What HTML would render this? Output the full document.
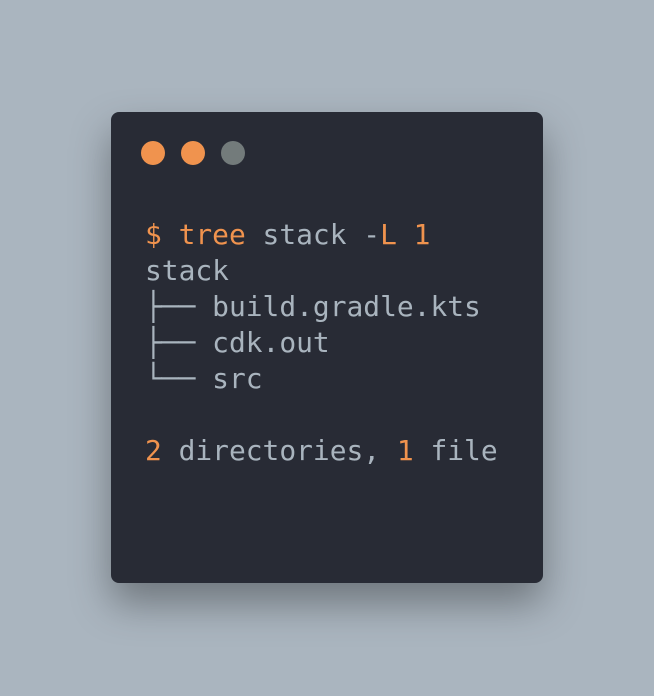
<!DOCTYPE html>
<html><head><style>
html,body{margin:0;padding:0}
body{width:654px;height:696px;background:#aab5bf;position:relative;overflow:hidden}
.card{position:absolute;left:111px;top:112px;width:432px;height:471px;background:#282b35;border-radius:8px;box-shadow:0 20px 40px rgba(0,0,0,0.35)}
.dot{position:absolute;top:141px;width:24px;height:24px;border-radius:50%}
pre{position:absolute;left:145px;top:217px;margin:0;font-family:"DejaVu Sans Mono","Liberation Mono",monospace;font-size:27.9px;line-height:36px;color:#a9b4be}
.o{color:#f0934e}
</style></head><body>
<div class="card"></div>
<div class="dot" style="left:141px;background:#f0934e"></div>
<div class="dot" style="left:181px;background:#f0934e"></div>
<div class="dot" style="left:221px;background:#737b7b"></div>
<pre><span class="o">$ tree</span> stack -<span class="o">L 1</span>
stack
├── build.gradle.kts
├── cdk.out
└── src

<span class="o">2</span> directories, <span class="o">1</span> file</pre>
</body></html>
